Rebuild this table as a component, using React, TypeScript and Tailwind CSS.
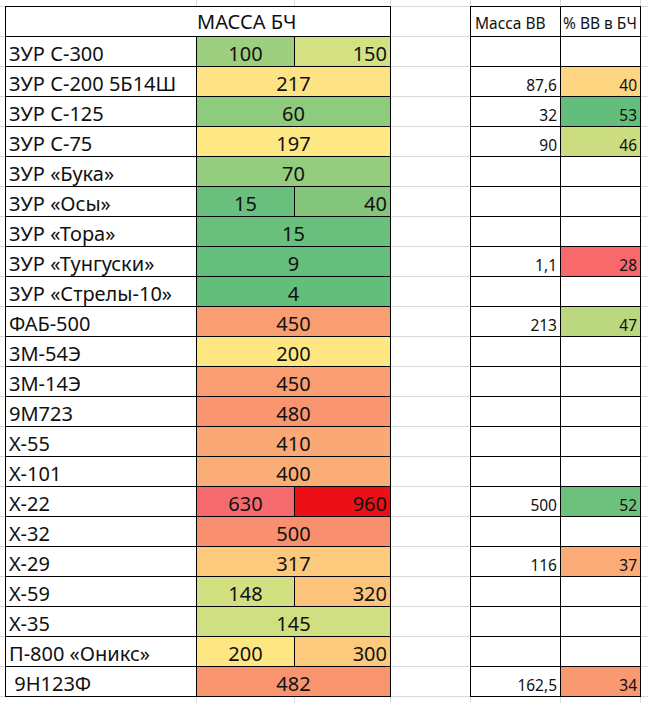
import React from "react";

type Cell = { v: string; bg: string };
type Row = { name: string; vals: Cell[]; vv?: string; pct?: Cell };

const rows: Row[] = [
  { name: "ЗУР С-300", vals: [{ v: "100", bg: "bg-[#9DCF7F]" }, { v: "150", bg: "bg-[#D4E182]" }] },
  { name: "ЗУР С-200 5Б14Ш", vals: [{ v: "217", bg: "bg-[#FDE383]" }], vv: "87,6", pct: { v: "40", bg: "bg-[#FED580]" } },
  { name: "ЗУР С-125", vals: [{ v: "60", bg: "bg-[#8FCB7D]" }], vv: "32", pct: { v: "53", bg: "bg-[#63BE7B]" } },
  { name: "ЗУР С-75", vals: [{ v: "197", bg: "bg-[#FDE884]" }], vv: "90", pct: { v: "46", bg: "bg-[#CBDC81]" } },
  { name: "ЗУР «Бука»", vals: [{ v: "70", bg: "bg-[#94CD7E]" }] },
  { name: "ЗУР «Осы»", vals: [{ v: "15", bg: "bg-[#69C07C]" }, { v: "40", bg: "bg-[#84C77C]" }] },
  { name: "ЗУР «Тора»", vals: [{ v: "15", bg: "bg-[#69C07C]" }] },
  { name: "ЗУР «Тунгуски»", vals: [{ v: "9", bg: "bg-[#65BF7C]" }], vv: "1,1", pct: { v: "28", bg: "bg-[#F8696B]" } },
  { name: "ЗУР «Стрелы-10»", vals: [{ v: "4", bg: "bg-[#63BE7B]" }] },
  { name: "ФАБ-500", vals: [{ v: "450", bg: "bg-[#F99D73]" }], vv: "213", pct: { v: "47", bg: "bg-[#BBD780]" } },
  { name: "3М-54Э", vals: [{ v: "200", bg: "bg-[#FEE783]" }] },
  { name: "3М-14Э", vals: [{ v: "450", bg: "bg-[#F99D73]" }] },
  { name: "9М723", vals: [{ v: "480", bg: "bg-[#F9966F]" }] },
  { name: "Х-55", vals: [{ v: "410", bg: "bg-[#FAA875]" }] },
  { name: "Х-101", vals: [{ v: "400", bg: "bg-[#FBAD77]" }] },
  { name: "Х-22", vals: [{ v: "630", bg: "bg-[#F56B6D]" }, { v: "960", bg: "bg-[#EA1016]" }], vv: "500", pct: { v: "52", bg: "bg-[#6EC17C]" } },
  { name: "Х-32", vals: [{ v: "500", bg: "bg-[#F88F6E]" }] },
  { name: "Х-29", vals: [{ v: "317", bg: "bg-[#FDC97D]" }], vv: "116", pct: { v: "37", bg: "bg-[#FBAB77]" } },
  { name: "Х-59", vals: [{ v: "148", bg: "bg-[#D3E082]" }, { v: "320", bg: "bg-[#FCC37C]" }] },
  { name: "Х-35", vals: [{ v: "145", bg: "bg-[#CFDF82]" }] },
  { name: "П-800 «Оникс»", vals: [{ v: "200", bg: "bg-[#FEE683]" }, { v: "300", bg: "bg-[#FCCA7D]" }] },
  { name: "\u00a09Н123Ф", vals: [{ v: "482", bg: "bg-[#F8956F]" }], vv: "162,5", pct: { v: "34", bg: "bg-[#F99971]" } },
];

function Strip() {
  return (
    <div className="flex h-[6px]">
      <div className="w-[197px] shrink-0 border-r border-[#dadada]" />
      <div className="w-[98px] shrink-0 border-r border-[#dadada]" />
      <div className="w-[96px] shrink-0 border-r border-[#dadada]" />
      <div className="w-[80px] shrink-0 border-r border-[#dadada]" />
      <div className="w-[90px] shrink-0 border-r border-[#dadada]" />
      <div className="w-[80px] shrink-0 border-r border-[#dadada]" />
      <div className="flex-1" />
    </div>
  );
}

export default function App() {
  return (
    <div className="w-[648px] h-[703px] bg-white text-[#111] font-['Noto_Sans',sans-serif] overflow-hidden">
      <Strip />
      {/* header row */}
      <div className="flex h-[31px]">
        <div className="w-[5px] shrink-0 border-y border-[#dadada]" />
        <div className="w-[386px] shrink-0 flex items-end border border-black text-[20px] leading-none pb-[4px]">
          <div className="w-[191px] shrink-0" />
          <div className="w-[98px] shrink-0 text-center whitespace-nowrap">МАССА БЧ</div>
        </div>
        <div className="w-[79px] shrink-0 border-y border-[#dadada]" />
        <div className="w-[91px] shrink-0 flex items-end border border-black text-[15.5px] leading-none pl-[4px] pb-[5px]">
          Масса ВВ
        </div>
        <div className="w-[80px] shrink-0 flex items-end border-y border-r border-black text-[15.5px] leading-none pl-[2px] pb-[5px] whitespace-nowrap">
          % ВВ в БЧ
        </div>
        <div className="flex-1 border-y border-[#dadada]" />
      </div>
      {rows.map((r, i) => (
        <div key={i} className="flex h-[30px]">
          <div className="w-[5px] shrink-0 border-b border-[#dadada]" />
          <div className="w-[192px] shrink-0 flex items-end border-x border-b border-black text-[20px] leading-none pl-[3px] pb-[2px] whitespace-pre">
            {r.name}
          </div>
          {r.vals.length === 1 ? (
            <div className={`w-[194px] shrink-0 flex items-end justify-center border-r border-b border-black text-[20px] leading-none pb-[2px] ${r.vals[0].bg}`}>
              {r.vals[0].v}
            </div>
          ) : (
            <>
              <div className={`w-[98px] shrink-0 flex items-end justify-center border-r border-b border-black text-[20px] leading-none pb-[2px] ${r.vals[0].bg}`}>
                {r.vals[0].v}
              </div>
              <div className={`w-[96px] shrink-0 flex items-end justify-end border-r border-b border-black text-[20px] leading-none pr-[3px] pb-[2px] ${r.vals[1].bg}`}>
                {r.vals[1].v}
              </div>
            </>
          )}
          <div className="w-[79px] shrink-0 border-b border-[#dadada]" />
          <div className="w-[91px] shrink-0 flex items-end justify-end border-x border-b border-black text-[15.5px] leading-none pr-[3px] pb-[3px]">
            {r.vv ?? ""}
          </div>
          <div className={`w-[80px] shrink-0 flex items-end justify-end border-r border-b border-black text-[15.5px] leading-none pr-[3px] pb-[3px] ${r.pct ? r.pct.bg : ""}`}>
            {r.pct ? r.pct.v : ""}
          </div>
          <div className="flex-1 border-b border-[#dadada]" />
        </div>
      ))}
      <Strip />
    </div>
  );
}
